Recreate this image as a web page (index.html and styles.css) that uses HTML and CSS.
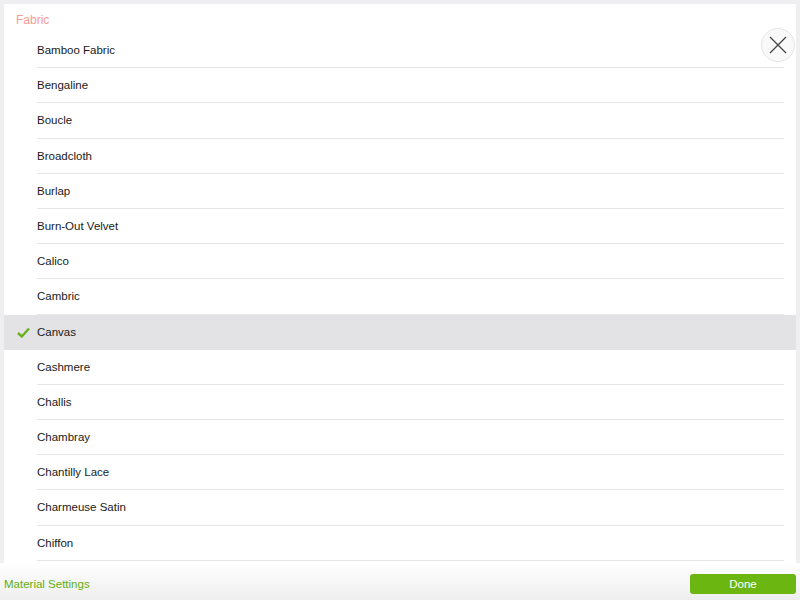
FILE: index.html
```html
<!doctype html>
<html lang="en">
  <head>
    <meta charset="UTF-8" />
    <title>Material Settings</title>
    <link rel="stylesheet" href="styles.css">
  </head>
  <body>
    <div class="sheet">
      <div class="panel">
        <div class="panel-title">Fabric</div>
        <button class="close" type="button" aria-label="Close">
          <svg width="18" height="18" viewBox="0 0 18 18">
            <path d="M1 1 L17 17 M17 1 L1 17" stroke="#444" stroke-width="1.3" fill="none"/>
          </svg>
        </button>
        <ul class="list">
          <li class="item"><span class="label">Bamboo Fabric</span></li>
          <li class="item"><span class="label">Bengaline</span></li>
          <li class="item"><span class="label">Boucle</span></li>
          <li class="item"><span class="label">Broadcloth</span></li>
          <li class="item"><span class="label">Burlap</span></li>
          <li class="item"><span class="label">Burn-Out Velvet</span></li>
          <li class="item"><span class="label">Calico</span></li>
          <li class="item"><span class="label">Cambric</span></li>
          <li class="item selected">
            <svg class="check" width="13" height="11" viewBox="0 0 13 11">
              <path d="M1 6 L4.8 9.5 L12 1.5" stroke="#6ab120" stroke-width="2.4" fill="none"/>
            </svg>
            <span class="label">Canvas</span>
          </li>
          <li class="item"><span class="label">Cashmere</span></li>
          <li class="item"><span class="label">Challis</span></li>
          <li class="item"><span class="label">Chambray</span></li>
          <li class="item"><span class="label">Chantilly Lace</span></li>
          <li class="item"><span class="label">Charmeuse Satin</span></li>
          <li class="item"><span class="label">Chiffon</span></li>
        </ul>
      </div>
    </div>
    <div class="footer">
      <span class="footer-title">Material Settings</span>
      <button class="done" type="button">Done</button>
    </div>
  </body>
</html>
```

FILE: styles.css
```css
body {
  margin: 0;
  font-family: "Liberation Sans", Arial, sans-serif;
  background-color: #efeff1;
  height: 600px;
  overflow: hidden;
}
.sheet {
  padding: 4px 4px 0;
}
.panel {
  position: relative;
  height: 559px;
  background: #fff;
  overflow: hidden;
}
.panel-title {
  height: 29px;
  line-height: 33px;
  padding-left: 12px;
  font-size: 12px;
  color: #f69c94;
}
.close {
  position: absolute;
  top: 24px;
  right: 1px;
  width: 34px;
  height: 34px;
  padding: 0;
  border: 1px solid #e6e6e8;
  border-radius: 50%;
  background: #f9f9f9;
  display: flex;
  align-items: center;
  justify-content: center;
}
.list {
  list-style: none;
  margin: 0;
  padding: 0;
}
.item {
  position: relative;
  padding: 0 12px 0 33px;
  font-size: 11.5px;
  color: #1a1a1a;
}
.label {
  display: block;
  height: 34.2px;
  line-height: 35px;
  border-bottom: 1px solid #e6e6e6;
}
.selected {
  background: #e3e3e5;
}
.selected .label {
  border-bottom-color: #e3e3e5;
}
.check {
  position: absolute;
  left: 13px;
  top: 12px;
}
.footer {
  height: 37px;
  display: flex;
  align-items: center;
  justify-content: space-between;
  padding: 0 4px;
  background: linear-gradient(#ffffff, #eeeeee);
}
.footer-title {
  font-size: 11.5px;
  color: #62ad10;
  padding-top: 5px;
}
.done {
  width: 106px;
  height: 20px;
  margin-top: 4px;
  padding: 0;
  border: none;
  border-radius: 3px;
  background-color: #6cb612;
  color: #fff;
  font-family: "Liberation Sans", Arial, sans-serif;
  font-size: 11.5px;
}
```
